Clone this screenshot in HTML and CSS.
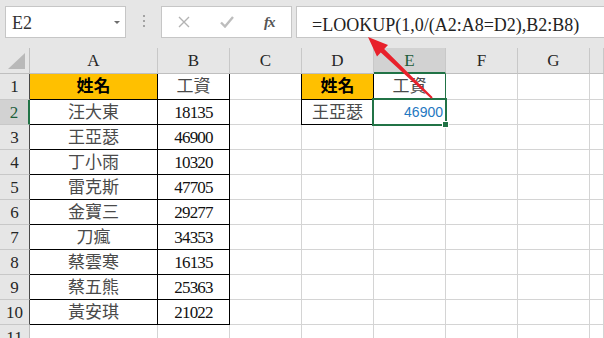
FILE: index.html
```html
<!DOCTYPE html>
<html lang="zh-Hant">
<head>
  <meta charset="UTF-8" />
  <title>LOOKUP</title>
  <link rel="stylesheet" href="styles.css">
</head>
<body>
  <div class="toolbar">
    <div class="namebox"><span>E2</span><span class="caret"></span></div>
    <div class="grip"><i></i><i></i><i></i></div>
    <div class="fxbtns">
      <svg width="12" height="12" viewBox="0 0 12 12"><path d="M1 1 L11 11 M11 1 L1 11" stroke="#b3b3b3" stroke-width="1.4" fill="none"/></svg>
      <svg width="14" height="12" viewBox="0 0 14 12"><path d="M1 6.5 L5 10.5 L13 1" stroke="#bdbdbd" stroke-width="2.4" fill="none"/></svg>
      <span class="fx">fx</span>
    </div>
    <div class="formula">=LOOKUP(1,0/(A2:A8=D2),B2:B8)</div>
  </div>

  <div class="sheet" id="sheet">
    <!-- cells are built below -->
  </div>

  <svg class="arrow" width="604" height="338" viewBox="0 0 604 338">
    <polygon points="368,37 388,45 384.2,49 432.7,97.3 431.3,98.7 380.8,52.6 377,56.6" fill="#e8212b"/>
  </svg>

  <script>
const sheet = document.getElementById('sheet');
const cols = ['A', 'B', 'C', 'D', 'E', 'F', 'G', ''];
const rows = [
  ['姓名', '工資', '', '姓名', '工資'],
  ['汪大東', '18135', '', '王亞瑟', '46900'],
  ['王亞瑟', '46900'],
  ['丁小雨', '10320'],
  ['雷克斯', '47705'],
  ['金寶三', '29277'],
  ['刀瘋', '34353'],
  ['蔡雲寒', '16135'],
  ['蔡五熊', '25363'],
  ['黃安琪', '21022'],
  []
];

function cell(cls, text) {
  const div = document.createElement('div');
  div.className = cls;
  div.textContent = text || '';
  sheet.appendChild(div);
  return div;
}

cell('corner').innerHTML = '<svg width="30" height="26"><polygon points="8,21 25,5 25,21" fill="#b9b9b9"/></svg>';
cols.forEach(c => cell(c === 'E' ? 'ch sel' : 'ch', c));

rows.forEach((row, i) => {
  const r = i + 1;
  let rh = 'rh';
  if (r <= 10) rh += ' edge';
  if (r === 2) rh += ' sel';
  cell(rh, r);

  cols.forEach((c, j) => {
    const text = row[j] || '';
    let cls = 'cell';
    if (r === 1 && (c === 'A' || c === 'D')) cls += ' gold';
    if (r <= 10 && (c === 'A' || c === 'B')) cls += ' bd';
    if (r <= 2 && (c === 'D' || c === 'E')) cls += ' bd';
    if (r <= 2 && c === 'D') cls += ' bl';
    if (r === 1 && c === 'E') cls += ' green';
    if (/^\d+$/.test(text)) cls += ' num';

    if (r === 2 && c === 'E') {
      const active = cell(cls + ' active');
      active.innerHTML = '<span class="value">' + text + '</span><div class="selection"><span class="handle"></span></div>';
    } else {
      cell(cls, text);
    }
  });
});
  </script>
</body>
</html>
```

FILE: styles.css
```css
body {
  margin: 0;
  width: 604px;
  height: 338px;
  overflow: hidden;
  background: #fff;
  position: relative;
  font-family: "Liberation Serif", "Noto Sans CJK TC", serif;
  color: #222;
}

.toolbar {
  height: 48px;
  box-sizing: border-box;
  background: #e6e6e6;
  display: flex;
  align-items: flex-start;
  padding: 6px 0 0 5px;
}

.namebox {
  width: 121px;
  height: 32px;
  box-sizing: border-box;
  background: #fff;
  border: 1px solid #c6c6c6;
  display: flex;
  justify-content: space-between;
  align-items: flex-start;
  padding: 4px 5px 0 6px;
  font-family: "Liberation Serif", serif;
  font-size: 18px;
  line-height: 24px;
  color: #333;
}

.caret {
  align-self: center;
  margin-top: -4px;
  border-left: 3.5px solid transparent;
  border-right: 3.5px solid transparent;
  border-top: 3.5px solid #6d6d6d;
}

.grip {
  width: 35px;
  display: flex;
  flex-direction: column;
  align-items: center;
  gap: 3px;
  padding-top: 9px;
}

.grip i {
  width: 2px;
  height: 2px;
  background: #a3a3a3;
}

.fxbtns {
  width: 131px;
  height: 32px;
  box-sizing: border-box;
  background: #fff;
  border: 1px solid #c6c6c6;
  display: flex;
  align-items: center;
  gap: 30px;
  padding: 0 0 0 16px;
}

.fx {
  font-style: italic;
  font-weight: bold;
  font-size: 15px;
  color: #555;
  letter-spacing: -1px;
}

.formula {
  flex: 1;
  height: 32px;
  box-sizing: border-box;
  margin-left: 4px;
  margin-right: -2px;
  background: #fff;
  border: 1px solid #c6c6c6;
  padding: 6px 0 0 15px;
  font-size: 18px;
  line-height: 24px;
  white-space: nowrap;
}

.sheet {
  display: grid;
  grid-template-columns: 30px 128px repeat(6, 72px) 1fr;
  grid-template-rows: 26px 26px repeat(10, 25px) 25px;
  font-size: 17px;
}

.sheet > div {
  box-sizing: border-box;
  display: flex;
  align-items: center;
  justify-content: center;
  line-height: 1;
  border-right: 1px solid #d4d4d4;
  border-bottom: 1px solid #d4d4d4;
}

.sheet > .corner {
  background: #e6e6e6;
  border-right: 1px solid #bfbfbf;
  border-bottom: 1px solid #bfbfbf;
  display: block;
}

.corner svg {
  display: block;
}

.sheet > .ch {
  background: #e6e6e6;
  border-right: 1px solid #c8c8c8;
  border-bottom: 1px solid #bfbfbf;
  color: #262626;
}

.sheet > .rh {
  background: #e6e6e6;
  border-right: 1px solid #bfbfbf;
  border-bottom: 1px solid #c8c8c8;
  color: #262626;
}

.sheet > .rh.edge {
  border-right-color: #4a4a4a;
}

.sheet > .ch.sel {
  background: #d2d2d2;
  border-bottom: 2px solid #217346;
  color: #1d5e3a;
}

.sheet > .rh.sel {
  background: #d2d2d2;
  border-right: 2px solid #217346;
  color: #1d5e3a;
}

.cell {
  color: #4a4a4a;
}

.sheet > .bd {
  border-right-color: #000;
  border-bottom-color: #000;
}

.sheet > .bl {
  box-shadow: -1px 0 0 #000;
}

.sheet > .green {
  border-right-color: #217346;
}

.gold {
  background: #ffc000;
  font-weight: bold;
}

.sheet > .gold {
  color: #000;
}

.sheet > .num {
  letter-spacing: -0.8px;
  color: #111;
}

.sheet > .active {
  position: relative;
  justify-content: flex-end;
  padding-right: 2px;
}

.value {
  font-family: "Liberation Sans", sans-serif;
  font-size: 14px;
  letter-spacing: 0;
  color: #1f78c1;
}

.selection {
  position: absolute;
  top: -2px;
  left: -2px;
  right: -2px;
  bottom: -2px;
  border: 2px solid #217346;
}

.handle {
  position: absolute;
  right: -4px;
  bottom: -4px;
  width: 5px;
  height: 5px;
  background: #217346;
  border: 1px solid #fff;
}

.arrow {
  position: absolute;
  top: 0;
  left: 0;
  pointer-events: none;
}
```
